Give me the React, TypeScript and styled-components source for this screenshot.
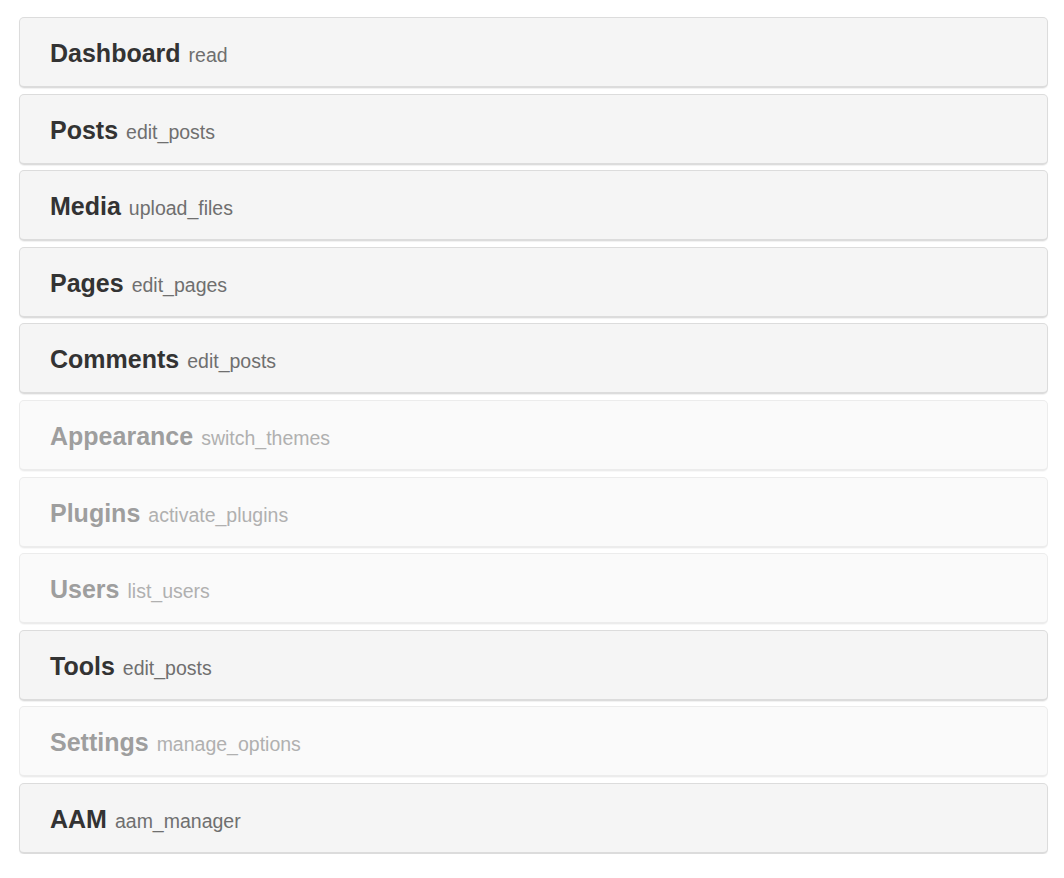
import { createGlobalStyle } from 'styled-components';
import styled from 'styled-components';

type MenuItem = {
  title: string;
  capability: string;
  active: boolean;
};

const items: MenuItem[] = [
  { title: 'Dashboard', capability: 'read', active: true },
  { title: 'Posts', capability: 'edit_posts', active: true },
  { title: 'Media', capability: 'upload_files', active: true },
  { title: 'Pages', capability: 'edit_pages', active: true },
  { title: 'Comments', capability: 'edit_posts', active: true },
  { title: 'Appearance', capability: 'switch_themes', active: false },
  { title: 'Plugins', capability: 'activate_plugins', active: false },
  { title: 'Users', capability: 'list_users', active: false },
  { title: 'Tools', capability: 'edit_posts', active: true },
  { title: 'Settings', capability: 'manage_options', active: false },
  { title: 'AAM', capability: 'aam_manager', active: true },
];

export default function App() {
  return (
    <>
      <GlobalStyle />
      <MenuList>
        {items.map(item => (
          <Panel key={item.title} $active={item.active}>
            <Title $active={item.active}>{item.title}</Title>
            <Capability $active={item.active}>{item.capability}</Capability>
          </Panel>
        ))}
      </MenuList>
    </>
  );
}

const GlobalStyle = createGlobalStyle`
  body {
    margin: 0;
    background: #ffffff;
    font-family: "Liberation Sans", Arial, sans-serif;
  }
`;

const MenuList = styled.div`
  display: flex;
  flex-direction: column;
  gap: 5.6px;
  padding: 17px 16px 0 19px;
`;

const Panel = styled.div<{ $active: boolean }>`
  height: 71px;
  box-sizing: border-box;
  display: flex;
  align-items: baseline;
  padding: 21px 30px 0;
  border: 1px solid ${p => (p.$active ? '#dcdcdc' : '#ececec')};
  border-bottom-width: 2px;
  border-radius: 5px;
  background: ${p => (p.$active ? '#f5f5f5' : '#fafafa')};
  box-shadow: 0 1px 1px ${p => (p.$active ? 'rgba(0, 0, 0, 0.06)' : 'rgba(0, 0, 0, 0.03)')};
`;

const Title = styled.span<{ $active: boolean }>`
  font-size: 25px;
  font-weight: 700;
  color: ${p => (p.$active ? '#333333' : '#9e9e9e')};
  margin-right: 8px;
`;

const Capability = styled.span<{ $active: boolean }>`
  font-size: 19.5px;
  color: ${p => (p.$active ? '#6f6f6f' : '#b0b0b0')};
`;
